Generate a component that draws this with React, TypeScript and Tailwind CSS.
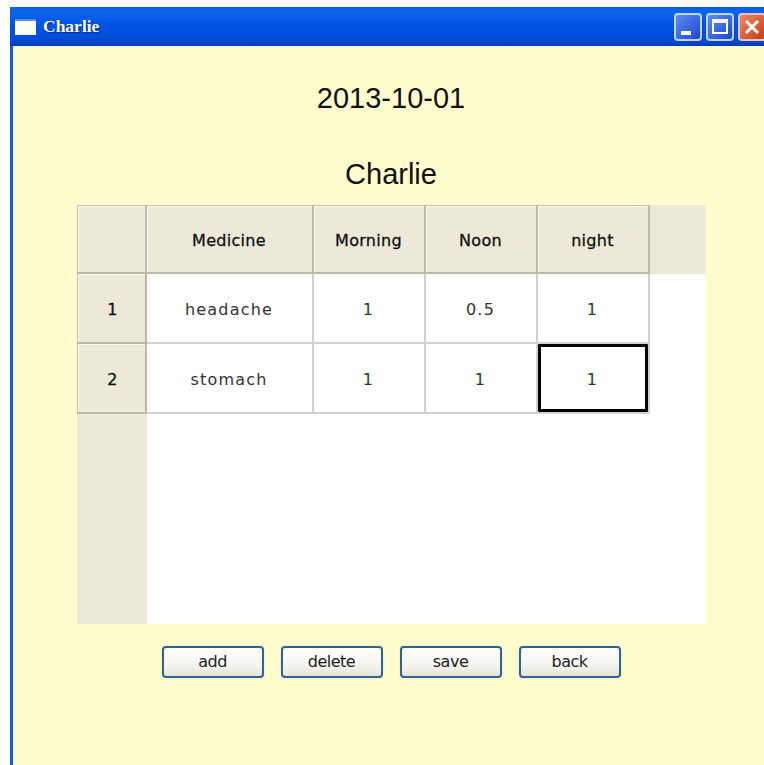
const headerCell = "flex items-center justify-center bg-[#ece9d8] shadow-[inset_1px_1px_0_#fbfaf4] border-r-2 border-b-2 border-r-[#bdb9a8] border-b-[#bdb9a8] pt-[3px] font-['DejaVu_Sans',sans-serif] text-[16px] tracking-[0.3px] text-[#111] [-webkit-text-stroke:0.3px_#111]";
const topEdge = "border-t border-t-[#c4c0b0]";
const leftEdge = "border-l border-l-[#c4c0b0] pl-[3px]";
const dataCell = "flex items-center justify-center bg-white border-r-2 border-b-2 border-[#d2d2d2] font-['DejaVu_Sans',sans-serif] text-[16px] tracking-[1.2px] text-[#333]";
const buttonClass = "w-[102px] h-[32px] rounded-[4px] border-2 border-[#2f6296] bg-[linear-gradient(#ffffff,#f4f4f0_60%,#e6e4da)] font-['DejaVu_Sans',sans-serif] text-[16px] tracking-[-0.5px] text-[#222] shadow-[0_0_2px_#d8d6c4]";

const columns = ["Medicine", "Morning", "Noon", "night"];
const rows = [
  { id: "1", cells: ["headache", "1", "0.5", "1"] },
  { id: "2", cells: ["stomach", "1", "1", "1"] },
];

export default function App() {
  return (
    <div className="w-[764px] h-[765px] overflow-hidden bg-white pl-[10px] pt-[7px]">
      <div className="w-[759px] h-[758px] flex flex-col border-l-[3px] border-[#1560e8] bg-[#fffdcd]">
        {/* title bar */}
        <div className="-ml-[3px] h-[39px] shrink-0 flex items-center pl-[5px] bg-[linear-gradient(#0a5ce0_0%,#0a64f0_14%,#0454e4_45%,#004cd8_85%,#003cb0_100%)]">
          <div className="w-[21px] h-[16px] mt-[1px] bg-[#fdfdf4] border-t-2 border-[#5d8fd8]" />
          <span className="ml-[7px] w-[60px] font-['Liberation_Serif',serif] font-bold text-[17.5px] text-white [text-shadow:1px_1px_1px_#0a2a80]">Charlie</span>
          <div className="ml-[571px] flex gap-[4px] shrink-0">
            <div className="w-[28px] h-[28px] rounded-[4px] border-2 border-[#c4d4f4] bg-[linear-gradient(135deg,#5f8cf0,#1c48d4)] relative">
              <div className="absolute left-[5px] bottom-[4px] w-[10px] h-[4px] bg-white" />
            </div>
            <div className="w-[28px] h-[28px] rounded-[4px] border-2 border-[#c4d4f4] bg-[linear-gradient(135deg,#5f8cf0,#1c48d4)] flex items-center justify-center">
              <div className="w-[16px] h-[15px] border-2 border-t-4 border-white" />
            </div>
            <div className="w-[28px] h-[28px] rounded-[4px] border-2 border-[#e8c4b4] bg-[linear-gradient(135deg,#ea8a64,#cc3c14)] flex items-center justify-center">
              <svg width="16" height="16" viewBox="0 0 16 16" stroke="white" strokeWidth="3">
                <path d="M2 2 L14 14 M14 2 L2 14" />
              </svg>
            </div>
          </div>
        </div>

        <div className="flex-1 flex flex-col items-center">
          <h1 className="mt-[35px] font-['Liberation_Sans',sans-serif] text-[29px] leading-[34px] text-[#111]">2013-10-01</h1>
          <h2 className="mt-[42px] font-['Liberation_Sans',sans-serif] text-[29px] leading-[34px] text-[#111]">Charlie</h2>

          {/* medicine table */}
          <div className="mt-[14px] w-[629px] grid grid-cols-[70px_167px_112px_112px_112px_56px] grid-rows-[69px_70px_70px_210px] bg-white">
            <div className={`${headerCell} ${topEdge} ${leftEdge}`} />
            {columns.map((c) => (
              <div key={c} className={`${headerCell} ${topEdge}`}>{c}</div>
            ))}
            <div className="bg-[#ece9d8]" />
            {rows.map((row, r) => (
              <div key={row.id} className="contents">
                <div className={`${headerCell} ${leftEdge}`}>{row.id}</div>
                {row.cells.map((value, i) => (
                  <div key={i} className={`${dataCell} ${r === 1 && i === 3 ? "" : "pt-[3px]"}`}>
                    {r === 1 && i === 3 ? (
                      <div className="w-full h-full flex items-center justify-center pt-[4px] border-[3px] border-black rounded-[1px]">{value}</div>
                    ) : (
                      value
                    )}
                  </div>
                ))}
                <div className="bg-white" />
              </div>
            ))}
            <div className="bg-[#ece9d8]" />
            <div className="col-span-5 bg-white" />
          </div>

          <div className="mt-[22px] flex gap-[17px]">
            <button className={buttonClass}>add</button>
            <button className={buttonClass}>delete</button>
            <button className={buttonClass}>save</button>
            <button className={buttonClass}>back</button>
          </div>
        </div>
      </div>
    </div>
  );
}
